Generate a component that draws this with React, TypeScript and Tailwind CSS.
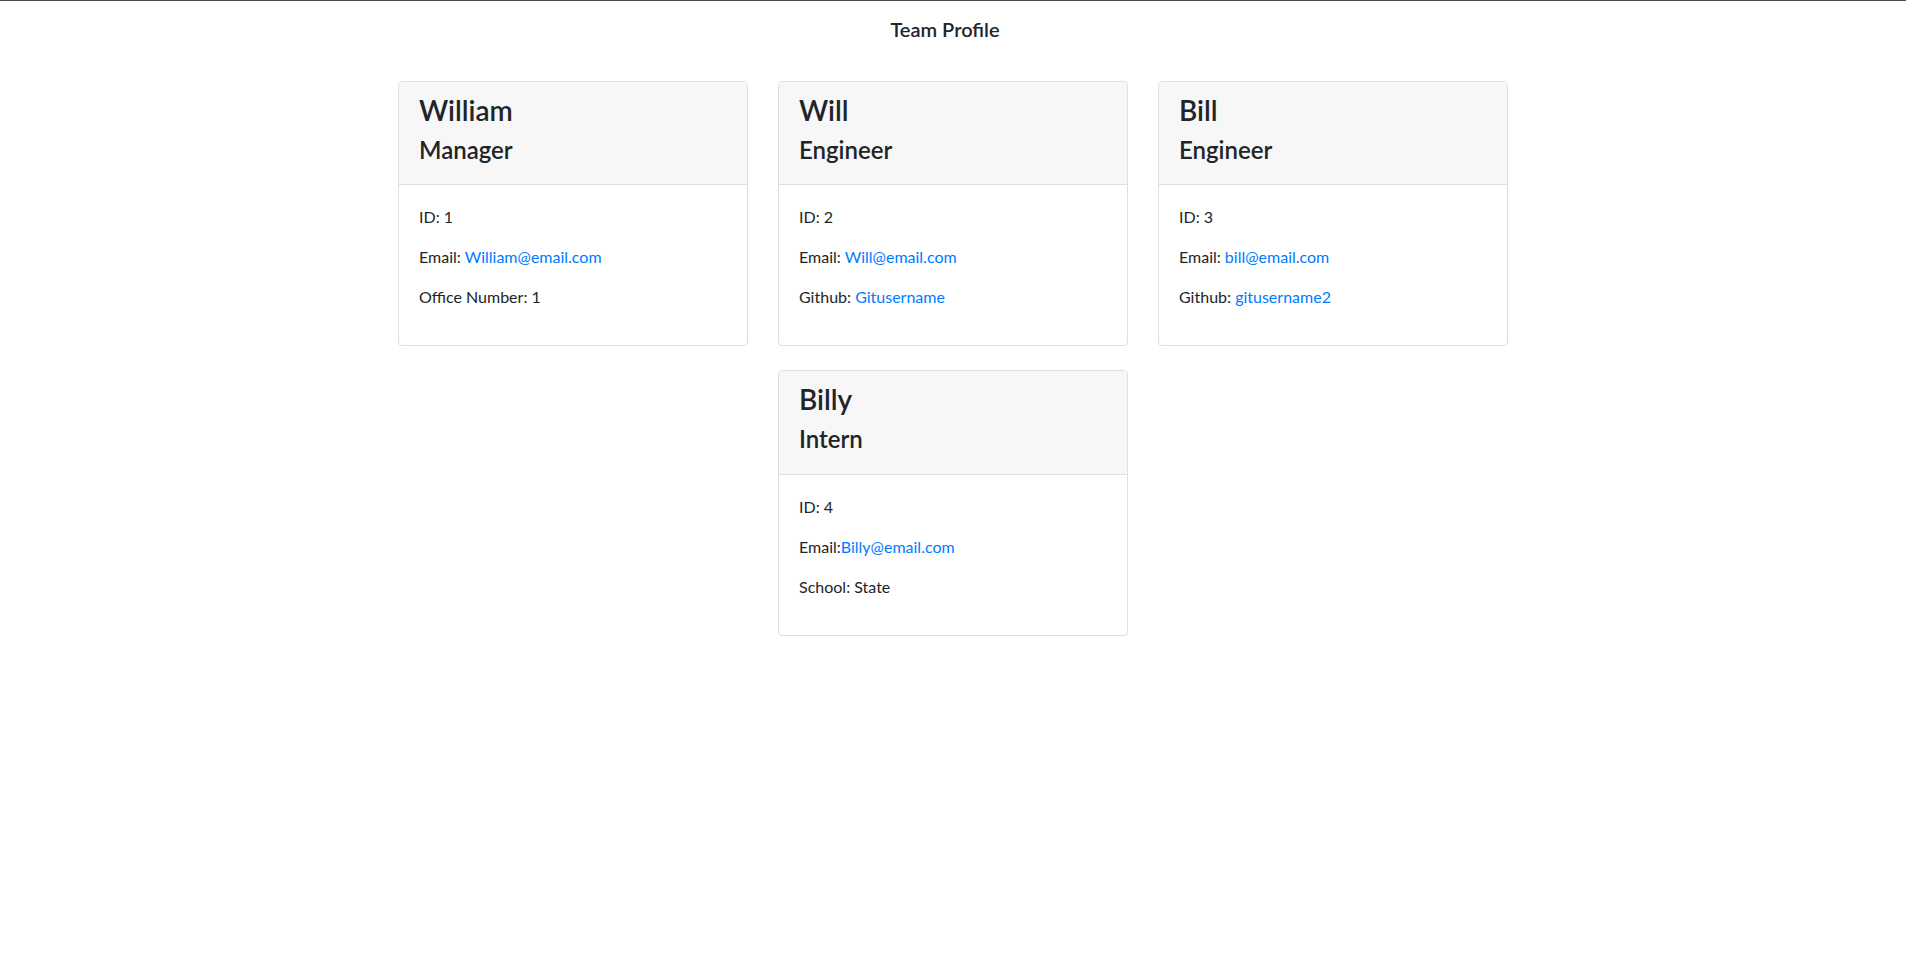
import React from 'react';

type Member = {
  name: string;
  role: string;
  id: number;
  email: string;
  emailSep?: string;
  extraLabel: string;
  extraValue: string;
  extraLink?: boolean;
};

const team: Member[] = [
  { name: 'William', role: 'Manager', id: 1, email: 'William@email.com', extraLabel: 'Office Number', extraValue: '1' },
  { name: 'Will', role: 'Engineer', id: 2, email: 'Will@email.com', extraLabel: 'Github', extraValue: 'Gitusername', extraLink: true },
  { name: 'Bill', role: 'Engineer', id: 3, email: 'bill@email.com', extraLabel: 'Github', extraValue: 'gitusername2', extraLink: true },
  { name: 'Billy', role: 'Intern', id: 4, email: 'Billy@email.com', emailSep: '', extraLabel: 'School', extraValue: 'State' },
];

function MemberCard({ m }: { m: Member }) {
  return (
    <div className="mt-6 w-[350px] overflow-hidden rounded-[4px] border border-[#dfdfdf] bg-white">
      {/* Header */}
      <div className="border-b border-[#dfdfdf] bg-[#f7f7f7] px-5 py-3">
        <h3 className="mb-2 text-[28px] font-semibold leading-[1.2]">{m.name}</h3>
        <h4 className="mb-2 text-[24px] font-semibold leading-[1.2]">{m.role}</h4>
      </div>

      {/* Body */}
      <div className="p-5 text-base leading-6">
        <p className="mb-4">ID: {m.id}</p>
        <p className="mb-4">
          Email:{m.emailSep ?? ' '}
          <a href={`mailto:${m.email}`} className="text-[#007bff]">
            {m.email}
          </a>
        </p>
        <p className="mb-4">
          {m.extraLabel}:{' '}
          {m.extraLink ? (
            <a href="#" className="text-[#007bff]">
              {m.extraValue}
            </a>
          ) : (
            m.extraValue
          )}
        </p>
      </div>
    </div>
  );
}

export default function App() {
  return (
    <div
      className="min-h-screen bg-white text-[#212529]"
      style={{ fontFamily: 'Lato, "Noto Sans", Arial, sans-serif' }}
    >
      {/* Navbar */}
      <nav className="flex h-[57px] items-center justify-center border-t border-[#4b4b4b] px-4">
        <span className="mr-4 text-[20px] font-semibold leading-[1.5]">Team Profile</span>
      </nav>

      {/* Cards */}
      <div className="mx-auto flex w-[1110px] flex-wrap justify-center gap-x-[30px]">
        {team.map((m) => (
          <MemberCard key={m.id} m={m} />
        ))}
      </div>
    </div>
  );
}
